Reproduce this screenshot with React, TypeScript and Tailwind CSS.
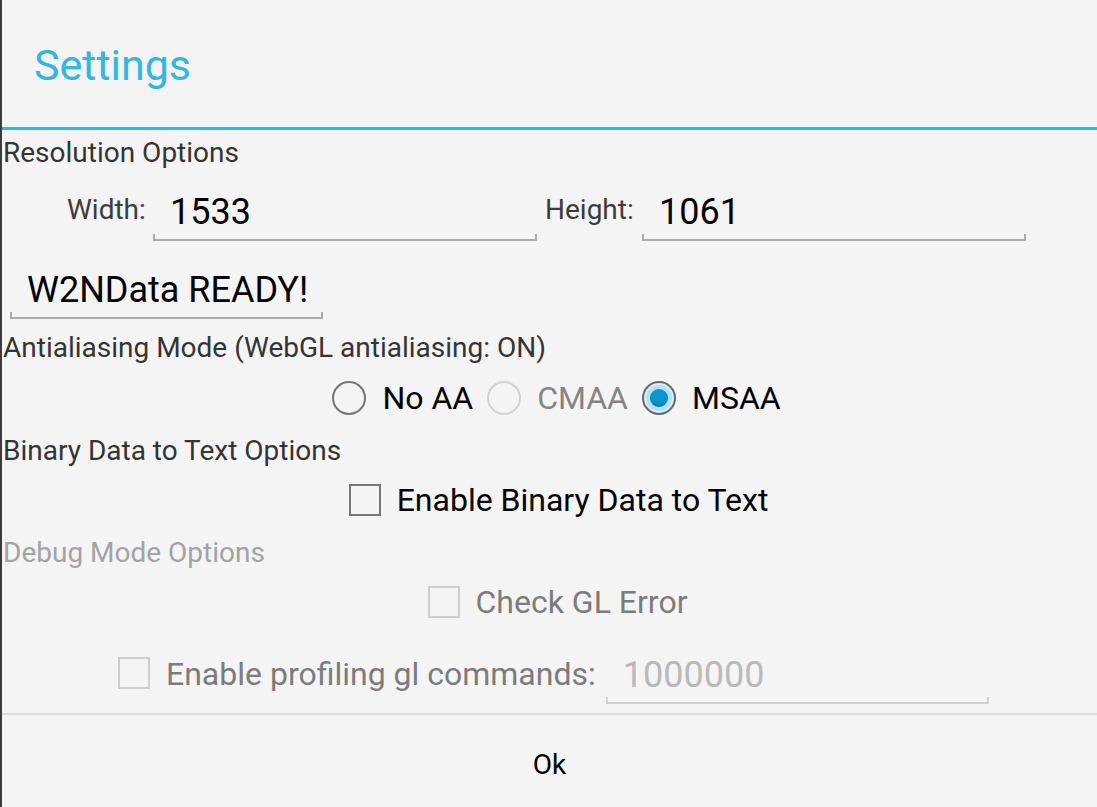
import React from "react";

function Field({
  value,
  width,
  disabled,
}: {
  value: string;
  width: string;
  disabled?: boolean;
}) {
  const line = disabled ? "bg-[#d2d2d2]" : "bg-[#ababab]";
  return (
    <div className={`flex flex-col ${width}`}>
      <div
        className={`h-[36px] pl-[17px] text-[36px] leading-none ${
          disabled ? "text-[#b9b9b9]" : "text-black"
        }`}
      >
        {value}
      </div>
      {/* holo underline with end ticks */}
      <div className="relative mt-1 h-[7px]">
        <div className={`absolute bottom-0 left-0 right-0 h-[2px] ${line}`} />
        <div className={`absolute bottom-0 left-0 h-[7px] w-[2px] ${line}`} />
        <div className={`absolute bottom-0 right-0 h-[7px] w-[2px] ${line}`} />
      </div>
    </div>
  );
}

function Radio({ label, state }: { label: string; state: "off" | "disabled" | "on" }) {
  return (
    <div className="flex items-center gap-4">
      {state === "on" ? (
        <div className="flex h-[34px] w-[34px] items-center justify-center rounded-full border-2 border-[#6a6a6a] bg-[#d9eff9]">
          <div className="flex h-[26px] w-[26px] items-center justify-center rounded-full bg-[#b4e1f4]">
            <div className="h-[18px] w-[18px] rounded-full bg-[#0996d1] shadow-[inset_0_-2px_3px_rgba(0,60,110,0.35)]" />
          </div>
        </div>
      ) : (
        <div
          className={`h-[34px] w-[34px] rounded-full border-2 ${
            state === "disabled" ? "border-[#d3d3d3]" : "border-[#747474]"
          }`}
        />
      )}
      <span
        className={`text-[32px] leading-none ${
          state === "disabled" ? "text-[#858585]" : "text-black"
        }`}
      >
        {label}
      </span>
    </div>
  );
}

function Check({ disabled }: { disabled?: boolean }) {
  return (
    <div
      className={`h-[32px] w-[32px] shrink-0 border-2 ${
        disabled ? "border-[#cdcdcd]" : "border-[#767676]"
      }`}
    />
  );
}

export default function App() {
  return (
    <div
      className="flex h-[807px] w-[1097px] overflow-hidden bg-[#f4f4f4]"
      style={{ fontFamily: "Roboto, 'Liberation Sans', sans-serif" }}
    >
      <div className="w-[2px] shrink-0 bg-[#3b3b3b]" />
      <div className="flex flex-1 flex-col">
        {/* Title */}
        <div className="h-[127px] pl-[32px] pt-[44px] text-[43px] leading-none text-[#33b5e5]">
          Settings
        </div>
        <div className="h-[3px] bg-[#33b5e5]" />

        {/* Resolution */}
        <div className="mt-[9px] pl-[1px] text-[28px] leading-none text-[#343434]">
          Resolution Options
        </div>
        <div className="flex items-start pl-[65px]">
          <div className="mt-[29px] w-[86px] text-[28px] leading-none text-[#3c3c3c]">Width:</div>
          <div className="mt-[27px]">
            <Field value="1533" width="w-[384px]" />
          </div>
          <div className="ml-[8px] mt-[29px] w-[97px] text-[28px] leading-none text-[#3c3c3c]">
            Height:
          </div>
          <div className="mt-[27px]">
            <Field value="1061" width="w-[384px]" />
          </div>
        </div>

        <div className="ml-[8px] mt-[31px]">
          <Field value="W2NData READY!" width="w-[313px]" />
        </div>

        {/* Antialiasing */}
        <div className="mt-[15px] pl-[1px] text-[28px] leading-none text-[#343434]">
          Antialiasing Mode (WebGL antialiasing: ON)
        </div>
        <div className="flex h-[75px] items-center justify-center gap-[14px] pb-[3px] pl-[14px]">
          <Radio label="No AA" state="off" />
          <Radio label="CMAA" state="disabled" />
          <Radio label="MSAA" state="on" />
        </div>

        {/* Binary data */}
        <div className="pl-[1px] text-[28px] leading-none text-[#343434]">
          Binary Data to Text Options
        </div>
        <div className="flex h-[70px] items-center justify-center gap-4 pl-[18px]">
          <Check />
          <span className="text-[32px] leading-none text-black">Enable Binary Data to Text</span>
        </div>

        {/* Debug */}
        <div className="mt-[4px] pl-[1px] text-[28px] leading-none text-[#a3a3a3]">
          Debug Mode Options
        </div>
        <div className="flex h-[70px] items-center justify-center gap-4 pl-[16px]">
          <Check disabled />
          <span className="text-[32px] leading-none text-[#7c7c7c]">Check GL Error</span>
        </div>
        <div className="flex h-[76px] items-start pl-[116px]">
          <div className="mt-[20px]">
            <Check disabled />
          </div>
          <span className="ml-4 mt-[21px] text-[32px] leading-none text-[#7c7c7c]">
            Enable profiling gl commands:
          </span>
          <div className="ml-[10px] mt-[20px]">
            <Field value="1000000" width="w-[383px]" disabled />
          </div>
        </div>

        <div className="h-[2px] bg-[#dcdcdc]" />

        {/* Button bar */}
        <button className="flex flex-1 justify-center pt-[36px] text-[28px] leading-none text-black">
          Ok
        </button>
      </div>
    </div>
  );
}
